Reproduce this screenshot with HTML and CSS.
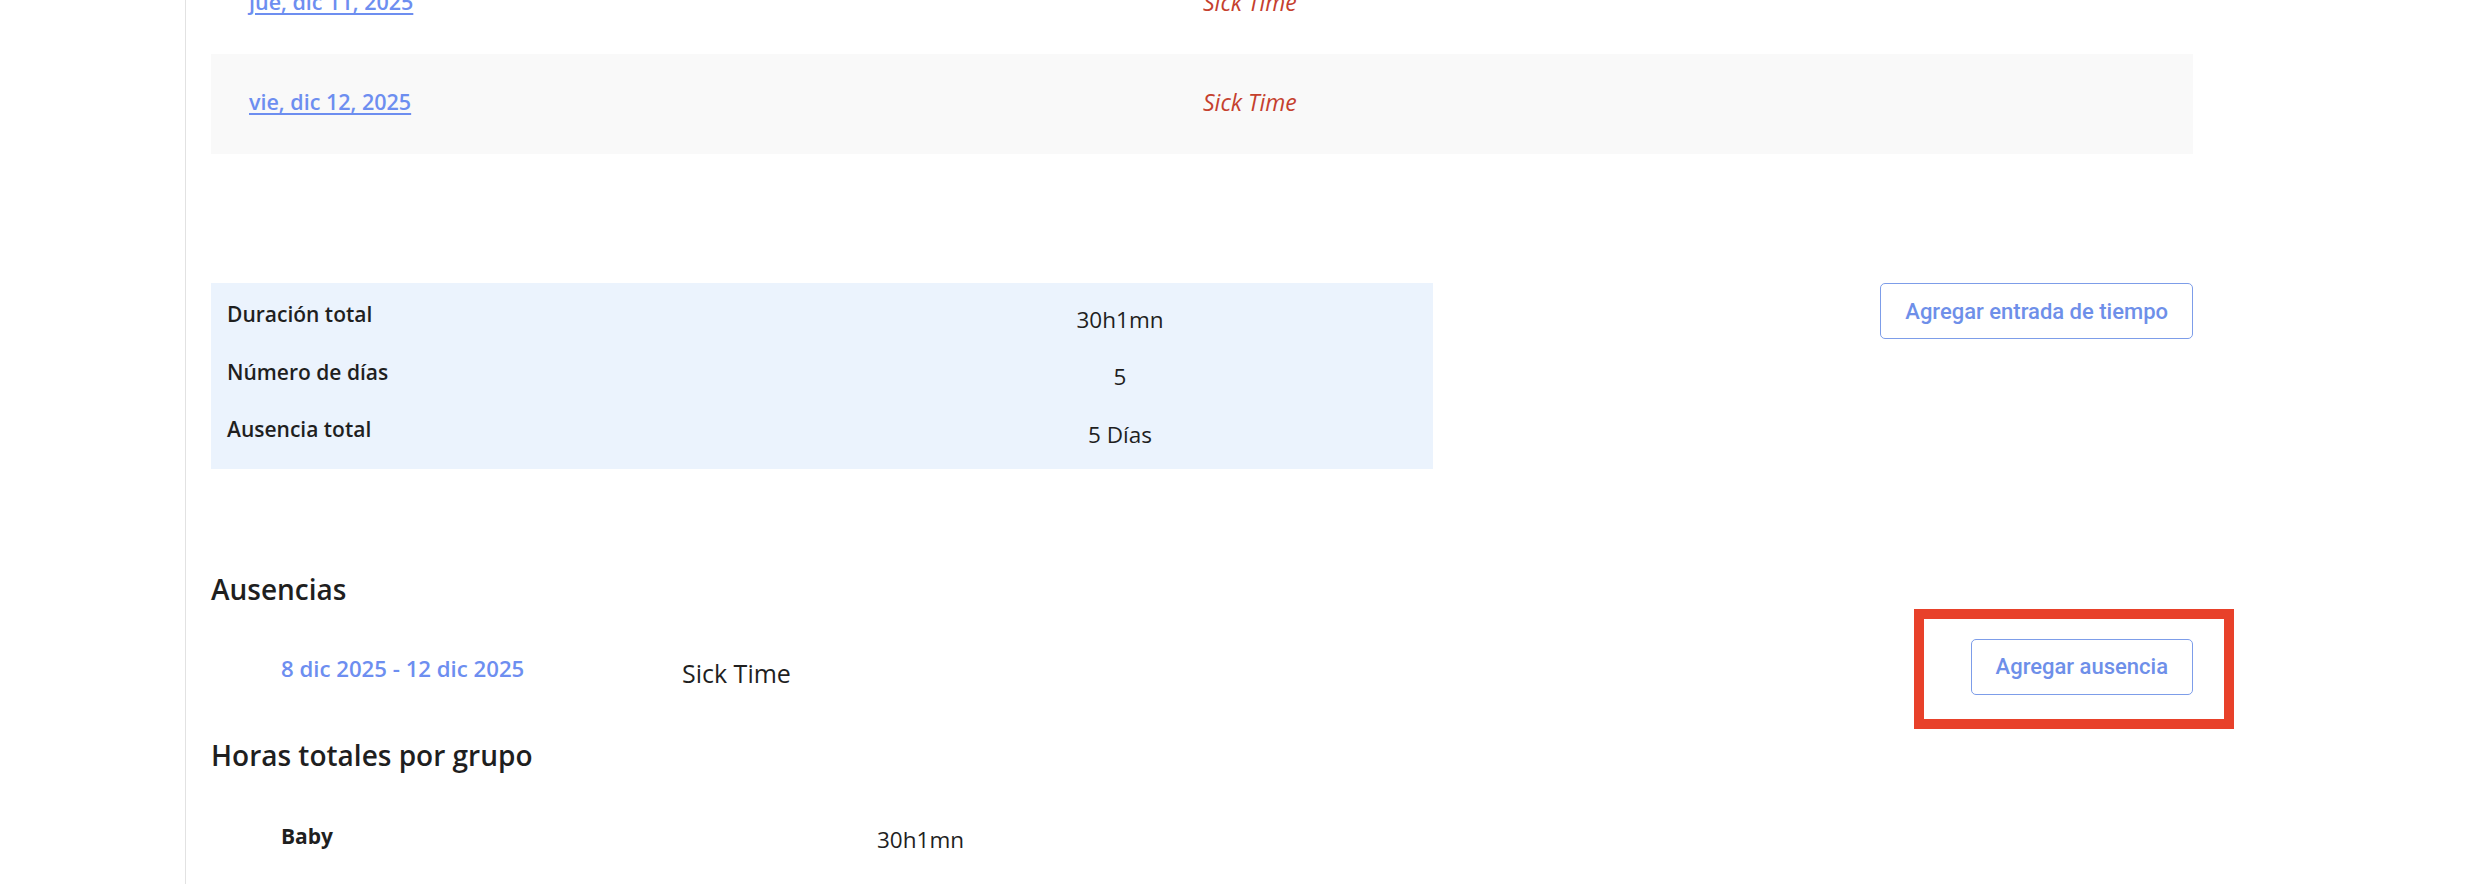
FILE: index.html
```html
<!DOCTYPE html>
<html lang="es">
<head>
<meta charset="utf-8">
<title>Entradas de tiempo</title>
<link rel="stylesheet" href="styles.css">
</head>
<body>
<div class="page">
  <aside class="sidebar"></aside>
  <main class="main">
    <div class="entries">
      <div class="entry-row">
        <a class="entry-date" href="#">jue, dic 11, 2025</a>
        <span class="entry-type">Sick Time</span>
      </div>
      <div class="entry-row striped">
        <a class="entry-date" href="#">vie, dic 12, 2025</a>
        <span class="entry-type">Sick Time</span>
      </div>
    </div>

    <section class="summary-section">
      <div class="summary">
        <div class="summary-row">
          <span class="summary-label">Duración total</span>
          <span class="summary-value">30h1mn</span>
        </div>
        <div class="summary-row">
          <span class="summary-label">Número de días</span>
          <span class="summary-value">5</span>
        </div>
        <div class="summary-row">
          <span class="summary-label">Ausencia total</span>
          <span class="summary-value">5 Días</span>
        </div>
      </div>
      <button class="btn" type="button">Agregar entrada de tiempo</button>
    </section>

    <h2 class="section-title title-abs">Ausencias</h2>
    <div class="abs-row">
      <div class="abs-item">
        <span class="abs-date">8 dic 2025 - 12 dic 2025</span>
        <span class="abs-type">Sick Time</span>
      </div>
      <span class="btn-wrap">
        <button class="btn" type="button">Agregar ausencia</button>
        <span class="highlight"></span>
      </span>
    </div>

    <h2 class="section-title title-groups">Horas totales por grupo</h2>
    <div class="group-row">
      <span class="group-name">Baby</span>
      <span class="group-value">30h1mn</span>
    </div>
  </main>
</div>
</body>
</html>
```

FILE: styles.css
```css
html, body {
  margin: 0;
  padding: 0;
  background: #ffffff;
}

body {
  font-family: "Open Sans", "Noto Sans", sans-serif;
  color: #1f1f1f;
  overflow: hidden;
}

.page {
  display: flex;
  height: 100vh;
  overflow: hidden;
}

.sidebar {
  width: 185px;
  flex: none;
  border-right: 1px solid #e2e2e2;
}

.main {
  padding-left: 25px;
  width: 1982px;
  flex: none;
}

/* time entries list */
.entries {
  margin-top: -46px;
}

.entry-row {
  box-sizing: border-box;
  height: 100px;
  display: grid;
  grid-template-columns: 954px auto;
  align-items: center;
  padding-left: 38px;
  padding-bottom: 5px;
}

.entry-row.striped {
  background: #f9f9f9;
}

.entry-date {
  font-size: 21.5px;
  font-weight: 600;
  color: #6d8ef0;
  text-decoration: underline;
  text-underline-offset: 3px;
  width: max-content;
}

.entry-type {
  font-size: 23px;
  font-style: italic;
  color: #c5402e;
}

/* summary */
.summary-section {
  margin-top: 129px;
  display: flex;
  justify-content: space-between;
  align-items: flex-start;
}

.summary {
  width: 1222px;
  background: #ebf3fd;
  padding: 5px 0 8px;
}

.summary-row {
  height: 57.5px;
  display: grid;
  grid-template-columns: 596px 1fr;
  align-items: center;
}

.summary-label {
  padding-left: 16px;
  padding-bottom: 5px;
  font-size: 21px;
  font-weight: 600;
  color: #1f1f1f;
}

.summary-value {
  padding-top: 5px;
  text-align: center;
  font-size: 22.5px;
  color: #1f1f1f;
}

.btn {
  height: 56px;
  padding: 0 24px;
  background: #ffffff;
  border: 1px solid #7d9de9;
  border-radius: 5px;
  font-family: Roboto, "Liberation Sans", sans-serif;
  font-weight: 500;
  font-size: 22px;
  color: #6e8fe9;
  cursor: pointer;
}

/* sections */
.section-title {
  margin: 0;
  font-size: 28px;
  font-weight: 600;
  line-height: 36px;
  color: #1f1f1f;
}

.title-abs {
  margin-top: 102px;
}

.title-groups {
  margin-top: 10px;
}

.abs-row {
  height: 120px;
  display: flex;
  align-items: center;
  justify-content: space-between;
}

.abs-item {
  display: grid;
  grid-template-columns: 401px auto;
  align-items: center;
  padding-left: 70px;
}

.abs-date {
  padding-top: 4px;
  font-size: 22.2px;
  font-weight: 600;
  color: #6d8ef0;
}

.abs-type {
  padding-top: 12px;
  font-size: 25px;
  color: #1f1f1f;
}

.btn-wrap {
  position: relative;
  display: inline-flex;
}

.highlight {
  position: absolute;
  left: -57px;
  right: -41px;
  top: -30px;
  bottom: -34px;
  border: 10px solid #e8412a;
  pointer-events: none;
}

.group-row {
  padding-top: 48px;
  display: grid;
  grid-template-columns: 596px auto;
  align-items: center;
  padding-left: 70px;
}

.group-name {
  padding-bottom: 4px;
  font-size: 21px;
  font-weight: 700;
  color: #1f1f1f;
}

.group-value {
  padding-top: 3px;
  font-size: 22.5px;
  color: #1f1f1f;
}
```
